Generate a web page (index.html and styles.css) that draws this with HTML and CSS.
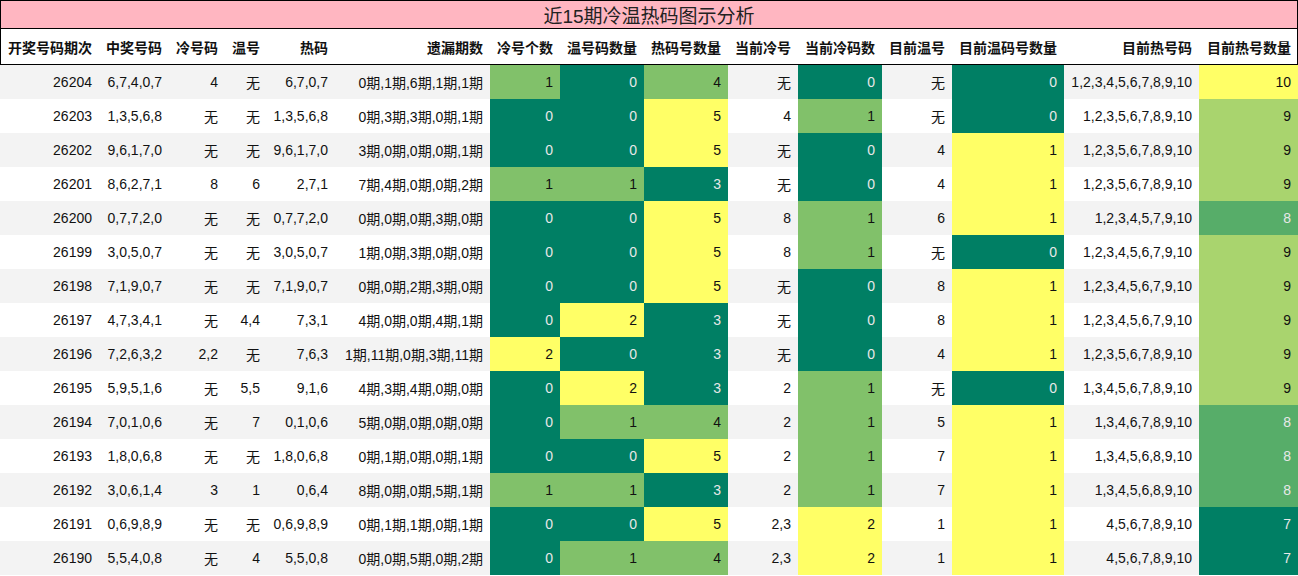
FILE: index.html
```html
<!DOCTYPE html>
<html lang="zh">
<head>
<meta charset="utf-8">
<title>近15期冷温热码图示分析</title>
<link rel="stylesheet" href="styles.css">
</head>
<body>
<div class="sheet">
  <div class="title">近15期冷温热码图示分析</div>
  <div class="row head">
    <div>开奖号码期次</div><div>中奖号码</div><div>冷号码</div><div>温号</div><div>热码</div><div>遗漏期数</div><div>冷号个数</div><div>温号码数量</div><div>热码号数量</div><div>当前冷号</div><div>当前冷码数</div><div>目前温号</div><div>目前温码号数量</div><div>目前热号码</div><div>目前热号数量</div>
  </div>
  <div class="row">
    <div>26204</div><div>6,7,4,0,7</div><div>4</div><div>无</div><div>6,7,0,7</div><div>0期,1期,6期,1期,1期</div><div class="m">1</div><div class="d">0</div><div class="m">4</div><div>无</div><div class="d">0</div><div>无</div><div class="d">0</div><div>1,2,3,4,5,6,7,8,9,10</div><div class="y">10</div>
  </div>
  <div class="row">
    <div>26203</div><div>1,3,5,6,8</div><div>无</div><div>无</div><div>1,3,5,6,8</div><div>0期,3期,3期,0期,1期</div><div class="d">0</div><div class="d">0</div><div class="y">5</div><div>4</div><div class="m">1</div><div>无</div><div class="d">0</div><div>1,2,3,5,6,7,8,9,10</div><div class="l">9</div>
  </div>
  <div class="row">
    <div>26202</div><div>9,6,1,7,0</div><div>无</div><div>无</div><div>9,6,1,7,0</div><div>3期,0期,0期,0期,1期</div><div class="d">0</div><div class="d">0</div><div class="y">5</div><div>无</div><div class="d">0</div><div>4</div><div class="y">1</div><div>1,2,3,5,6,7,8,9,10</div><div class="l">9</div>
  </div>
  <div class="row">
    <div>26201</div><div>8,6,2,7,1</div><div>8</div><div>6</div><div>2,7,1</div><div>7期,4期,0期,0期,2期</div><div class="m">1</div><div class="m">1</div><div class="d">3</div><div>无</div><div class="d">0</div><div>4</div><div class="y">1</div><div>1,2,3,5,6,7,8,9,10</div><div class="l">9</div>
  </div>
  <div class="row">
    <div>26200</div><div>0,7,7,2,0</div><div>无</div><div>无</div><div>0,7,7,2,0</div><div>0期,0期,0期,3期,0期</div><div class="d">0</div><div class="d">0</div><div class="y">5</div><div>8</div><div class="m">1</div><div>6</div><div class="y">1</div><div>1,2,3,4,5,7,9,10</div><div class="s">8</div>
  </div>
  <div class="row">
    <div>26199</div><div>3,0,5,0,7</div><div>无</div><div>无</div><div>3,0,5,0,7</div><div>1期,0期,3期,0期,0期</div><div class="d">0</div><div class="d">0</div><div class="y">5</div><div>8</div><div class="m">1</div><div>无</div><div class="d">0</div><div>1,2,3,4,5,6,7,9,10</div><div class="l">9</div>
  </div>
  <div class="row">
    <div>26198</div><div>7,1,9,0,7</div><div>无</div><div>无</div><div>7,1,9,0,7</div><div>0期,0期,2期,3期,0期</div><div class="d">0</div><div class="d">0</div><div class="y">5</div><div>无</div><div class="d">0</div><div>8</div><div class="y">1</div><div>1,2,3,4,5,6,7,9,10</div><div class="l">9</div>
  </div>
  <div class="row">
    <div>26197</div><div>4,7,3,4,1</div><div>无</div><div>4,4</div><div>7,3,1</div><div>4期,0期,0期,4期,1期</div><div class="d">0</div><div class="y">2</div><div class="d">3</div><div>无</div><div class="d">0</div><div>8</div><div class="y">1</div><div>1,2,3,4,5,6,7,9,10</div><div class="l">9</div>
  </div>
  <div class="row">
    <div>26196</div><div>7,2,6,3,2</div><div>2,2</div><div>无</div><div>7,6,3</div><div>1期,11期,0期,3期,11期</div><div class="y">2</div><div class="d">0</div><div class="d">3</div><div>无</div><div class="d">0</div><div>4</div><div class="y">1</div><div>1,2,3,5,6,7,8,9,10</div><div class="l">9</div>
  </div>
  <div class="row">
    <div>26195</div><div>5,9,5,1,6</div><div>无</div><div>5,5</div><div>9,1,6</div><div>4期,3期,4期,0期,0期</div><div class="d">0</div><div class="y">2</div><div class="d">3</div><div>2</div><div class="m">1</div><div>无</div><div class="d">0</div><div>1,3,4,5,6,7,8,9,10</div><div class="l">9</div>
  </div>
  <div class="row">
    <div>26194</div><div>7,0,1,0,6</div><div>无</div><div>7</div><div>0,1,0,6</div><div>5期,0期,0期,0期,0期</div><div class="d">0</div><div class="m">1</div><div class="m">4</div><div>2</div><div class="m">1</div><div>5</div><div class="y">1</div><div>1,3,4,6,7,8,9,10</div><div class="s">8</div>
  </div>
  <div class="row">
    <div>26193</div><div>1,8,0,6,8</div><div>无</div><div>无</div><div>1,8,0,6,8</div><div>0期,1期,0期,0期,1期</div><div class="d">0</div><div class="d">0</div><div class="y">5</div><div>2</div><div class="m">1</div><div>7</div><div class="y">1</div><div>1,3,4,5,6,8,9,10</div><div class="s">8</div>
  </div>
  <div class="row">
    <div>26192</div><div>3,0,6,1,4</div><div>3</div><div>1</div><div>0,6,4</div><div>8期,0期,0期,5期,1期</div><div class="m">1</div><div class="m">1</div><div class="d">3</div><div>2</div><div class="m">1</div><div>7</div><div class="y">1</div><div>1,3,4,5,6,8,9,10</div><div class="s">8</div>
  </div>
  <div class="row">
    <div>26191</div><div>0,6,9,8,9</div><div>无</div><div>无</div><div>0,6,9,8,9</div><div>0期,1期,1期,0期,1期</div><div class="d">0</div><div class="d">0</div><div class="y">5</div><div>2,3</div><div class="y">2</div><div>1</div><div class="y">1</div><div>4,5,6,7,8,9,10</div><div class="d">7</div>
  </div>
  <div class="row">
    <div>26190</div><div>5,5,4,0,8</div><div>无</div><div>4</div><div>5,5,0,8</div><div>0期,0期,5期,0期,2期</div><div class="d">0</div><div class="m">1</div><div class="m">4</div><div>2,3</div><div class="y">2</div><div>1</div><div class="y">1</div><div>4,5,6,7,8,9,10</div><div class="d">7</div>
  </div>
</div>
</body>
</html>
```

FILE: styles.css
```css
html, body {
  margin: 0;
  padding: 0;
  background: #ffffff;
}

body {
  font-family: "Liberation Sans", "Noto Sans CJK SC", sans-serif;
  font-size: 14px;
  color: #111111;
}

.sheet {
  width: 1298px;
}

.title {
  box-sizing: border-box;
  height: 29px;
  border: 1px solid #000000;
  background: #ffb6c1;
  display: flex;
  align-items: center;
  justify-content: center;
  font-size: 19px;
  color: #222222;
}

.row {
  display: grid;
  grid-template-columns: 99px 70px 56px 42px 68px 155px 70px 84px 84px 70px 84px 70px 112px 135px 99px;
  height: 34px;
}

.row > div {
  display: flex;
  align-items: center;
  justify-content: flex-end;
  padding-right: 7px;
  white-space: nowrap;
}

.row:nth-child(odd) {
  background: #f3f3f3;
}

.row:nth-child(even) {
  background: #ffffff;
}

.row.head {
  height: 35px;
  background: #ffffff;
  font-weight: bold;
  border-bottom: 1px solid #000000;
  box-shadow: inset 1px 0 0 #000000, inset -1px 0 0 #000000;
}

.row > .d {
  background: #007f64;
  color: #e8e8e8;
}

.row > .m {
  background: #81c16a;
}

.row > .y {
  background: #ffff66;
}

.row > .l {
  background: #a9d46e;
}

.row > .s {
  background: #57ad69;
  color: #e8e8e8;
}
```
